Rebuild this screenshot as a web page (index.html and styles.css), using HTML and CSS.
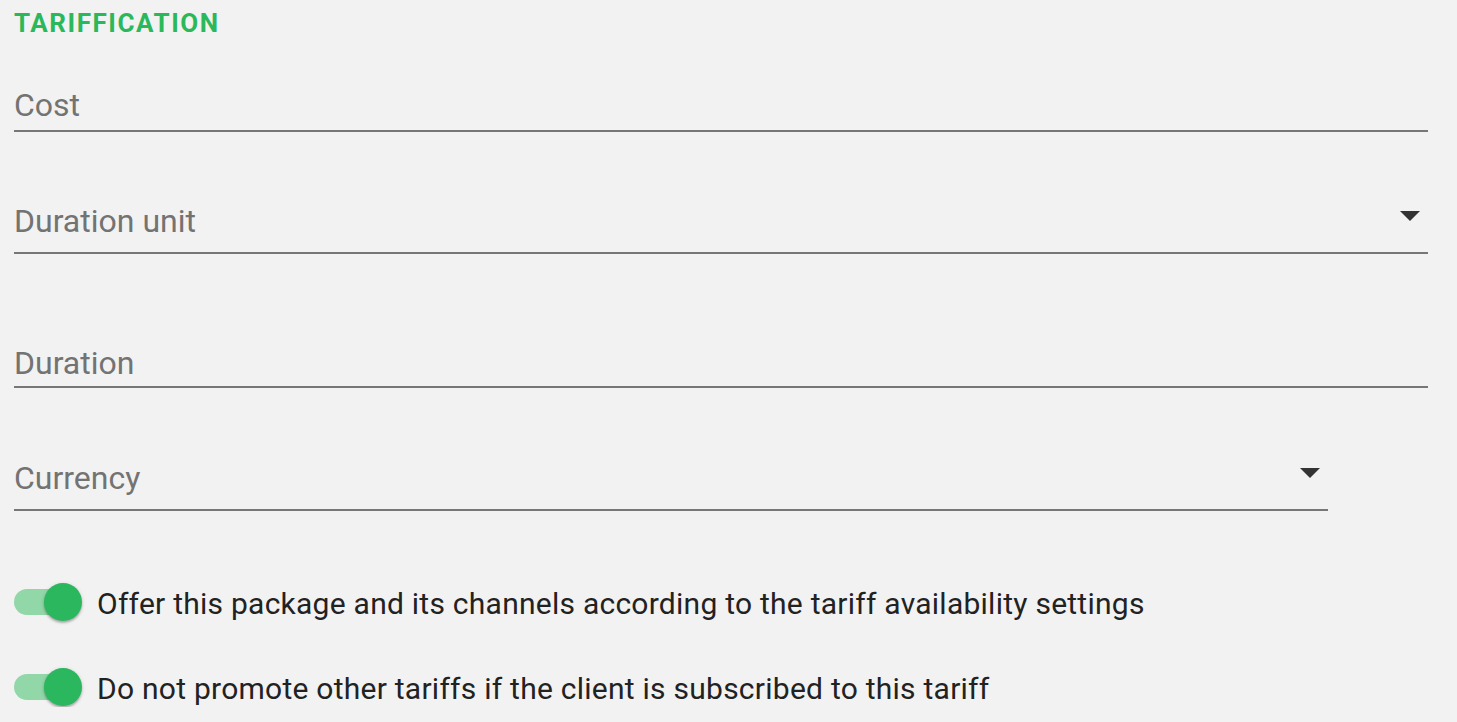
FILE: index.html
```html
<!DOCTYPE html>
<html>
<head>
<meta charset="utf-8">
<link rel="stylesheet" href="styles.css">
</head>
<body>
<div class="form">
  <h2 class="section-title">TARIFFICATION</h2>

  <div class="field field-cost">
    <span class="label">Cost</span>
  </div>

  <div class="field field-select field-unit">
    <span class="label">Duration unit</span>
    <span class="arrow"></span>
  </div>

  <div class="field field-duration">
    <span class="label">Duration</span>
  </div>

  <div class="field field-select field-currency">
    <span class="label">Currency</span>
    <span class="arrow"></span>
  </div>

  <div class="toggle-row toggle-first">
    <span class="switch"><span class="track"></span><span class="thumb"></span></span>
    <span class="toggle-text">Offer this package and its channels according to the tariff availability settings</span>
  </div>

  <div class="toggle-row toggle-second">
    <span class="switch"><span class="track"></span><span class="thumb"></span></span>
    <span class="toggle-text">Do not promote other tariffs if the client is subscribed to this tariff</span>
  </div>
</div>
</body>
</html>
```

FILE: styles.css
```css
html, body {
  margin: 0;
  padding: 0;
  background: #f2f2f2;
}

body {
  font-family: Roboto, "Liberation Sans", sans-serif;
}

.form {
  display: flex;
  flex-direction: column;
  padding-left: 14px;
  width: 1414px;
}

.section-title {
  margin: 0;
  font-size: 26px;
  line-height: 25px;
  font-weight: 700;
  letter-spacing: 1.55px;
  color: #2ab85b;
  padding-top: 11px;
}

.field {
  position: relative;
  display: flex;
  align-items: flex-end;
  border-bottom: 2px solid #777777;
}

.label {
  font-size: 32px;
  line-height: 30px;
  color: #737373;
}

.field-cost {
  margin-top: 54px;
  padding-bottom: 10px;
}

.field-unit {
  margin-top: 74px;
  padding-bottom: 16px;
}

.field-duration {
  margin-top: 94px;
  padding-bottom: 8px;
}

.field-currency {
  margin-top: 75px;
  padding-bottom: 16px;
  width: 1314px;
}

.arrow {
  position: absolute;
  right: 8px;
  top: 5px;
  width: 0;
  height: 0;
  border-left: 10px solid transparent;
  border-right: 10px solid transparent;
  border-top: 10px solid #333333;
}

.toggle-row {
  display: flex;
  align-items: center;
  height: 40px;
}

.toggle-first {
  margin-top: 71px;
}

.toggle-second {
  margin-top: 45px;
}

.switch {
  position: relative;
  width: 68px;
  height: 40px;
  flex: none;
  margin-right: 15px;
}

.track {
  position: absolute;
  left: 0;
  top: 7px;
  width: 65px;
  height: 26px;
  border-radius: 13px;
  background: #91d7a8;
}

.thumb {
  position: absolute;
  left: 30px;
  top: 1px;
  width: 38px;
  height: 38px;
  border-radius: 50%;
  background: #2bb75d;
  box-shadow: 0 2px 2px rgba(0,0,0,0.22), 0 1px 4px rgba(0,0,0,0.14);
}

.toggle-text {
  font-size: 30px;
  line-height: 30px;
  letter-spacing: 0.25px;
  color: #222222;
  padding-top: 3px;
}
```
